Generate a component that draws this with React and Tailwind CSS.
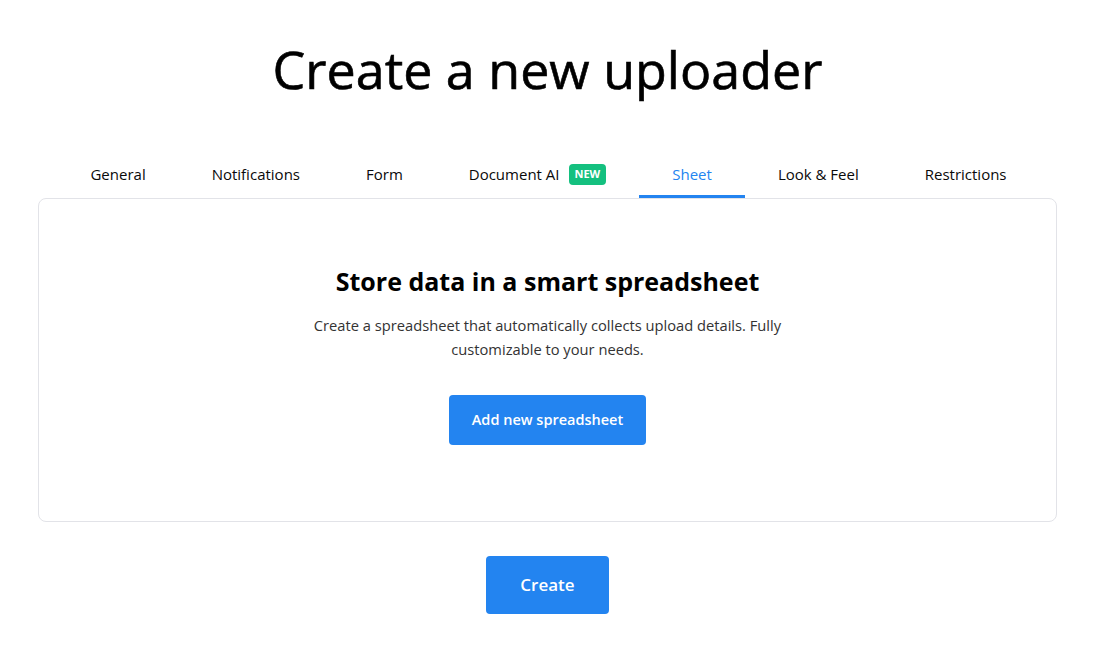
const tabs = [
  { label: "General" },
  { label: "Notifications" },
  { label: "Form" },
  { label: "Document AI", badge: "NEW" },
  { label: "Sheet", active: true },
  { label: "Look & Feel" },
  { label: "Restrictions" },
];

export default function App() {
  return (
    <div
      className="min-h-screen bg-white text-black"
      style={{ fontFamily: '"Open Sans", "Noto Sans", sans-serif' }}
    >
      <div className="flex flex-col items-center pt-[34px]">
        <h1 className="text-[52px] leading-[70px] font-normal [-webkit-text-stroke:0.6px_black]">
          Create a new uploader
        </h1>

        {/* tab bar */}
        <div className="mt-[48px] flex w-full justify-center pl-[2px]">
          {tabs.map((tab) => (
            <div key={tab.label} className="flex h-[46px] flex-col">
              <div
                className={`flex flex-1 items-center gap-[9px] px-[33px] pt-[2px] text-[15px] ${
                  tab.active ? "text-[#2384f0]" : "text-[#0a0a0a]"
                }`}
              >
                <span>{tab.label}</span>
                {tab.badge && (
                  <span className="flex h-[21px] items-center rounded-[4px] bg-[#14c07f] px-[6px] text-[11px] font-bold text-white">
                    {tab.badge}
                  </span>
                )}
              </div>
              <div
                className={`h-[3px] ${tab.active ? "bg-[#2384f0]" : "bg-transparent"}`}
              />
            </div>
          ))}
        </div>

        {/* sheet panel */}
        <div className="mx-[39px] flex h-[324px] w-[1019px] flex-col items-center rounded-[8px] border border-[#e2e3e8] pt-[64px]">
          <h2 className="text-[25px] leading-[36px] font-bold">
            Store data in a smart spreadsheet
          </h2>
          <p className="mt-[14px] w-[480px] text-center text-[14.7px] leading-[24px] text-[#333]">
            Create a spreadsheet that automatically collects upload details. Fully
            customizable to your needs.
          </p>
          <button className="mt-[34px] h-[50px] w-[197px] rounded-[4px] bg-[#2384f0] text-[14.5px] font-semibold text-white">
            Add new spreadsheet
          </button>
        </div>

        <button className="mt-[34px] h-[58px] w-[123px] rounded-[4px] bg-[#2384f0] text-[17px] font-semibold text-white">
          Create
        </button>
      </div>
    </div>
  );
}
